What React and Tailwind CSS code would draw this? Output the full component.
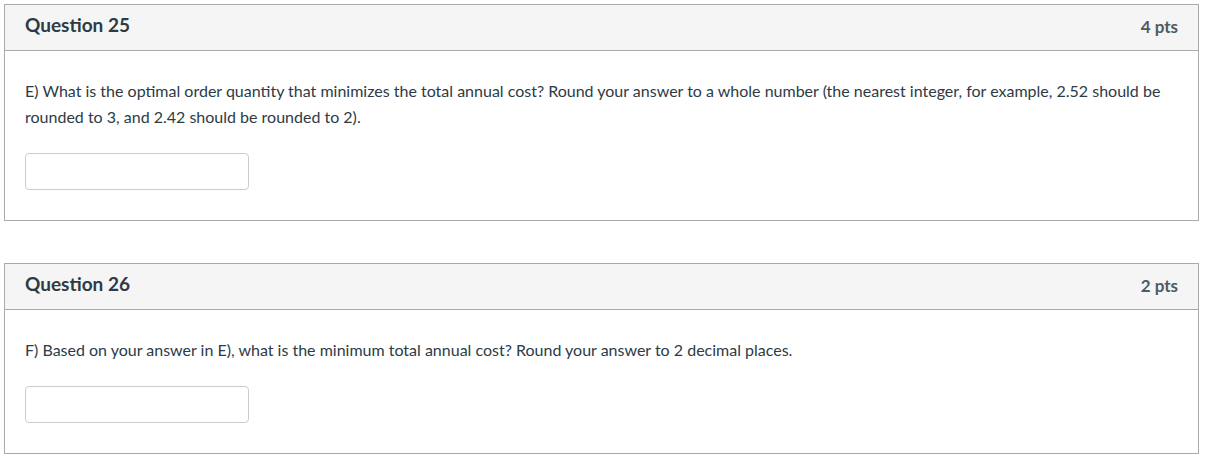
const questions = [
  {
    id: 25,
    points: 4,
    lines: [
      "E) What is the optimal order quantity that minimizes the total annual cost? Round your answer to a whole number (the nearest integer, for example, 2.52 should be",
      "rounded to 3, and 2.42 should be rounded to 2).",
    ],
  },
  {
    id: 26,
    points: 2,
    lines: [
      "F) Based on your answer in E), what is the minimum total annual cost? Round your answer to 2 decimal places.",
    ],
  },
];

function QuestionCard({ question }) {
  return (
    <section className="border border-[#aaaaaa] bg-white">
      <div className="flex h-[46px] items-center justify-between border-b border-[#aaaaaa] bg-[#f5f5f5] pb-[2px] pl-[20px] pr-[20px]">
        <h2 className="mb-[2px] text-[19px] font-bold text-[#2d3b45]">Question {question.id}</h2>
        <span className="text-[17px] font-bold text-[#4f5a62]">{question.points} pts</span>
      </div>
      <div className="px-[20px] pt-[27px] pb-[30px]">
        <div className="text-[16px] leading-[26px] text-[#2d3b45]">
          {question.lines.map((line) => (
            <div key={line}>{line}</div>
          ))}
        </div>
        <input
          type="text"
          aria-label={`Answer for question ${question.id}`}
          className="mt-[23px] block h-[37px] w-[224px] rounded-[4px] border border-[#cccccc] bg-white"
        />
      </div>
    </section>
  );
}

export default function App() {
  return (
    <div className="min-h-[461px] bg-white px-[4px] pt-[4px] font-['Lato',sans-serif]">
      <div className="flex w-[1195px] flex-col gap-[42px]">
        {questions.map((question) => (
          <QuestionCard key={question.id} question={question} />
        ))}
      </div>
    </div>
  );
}
